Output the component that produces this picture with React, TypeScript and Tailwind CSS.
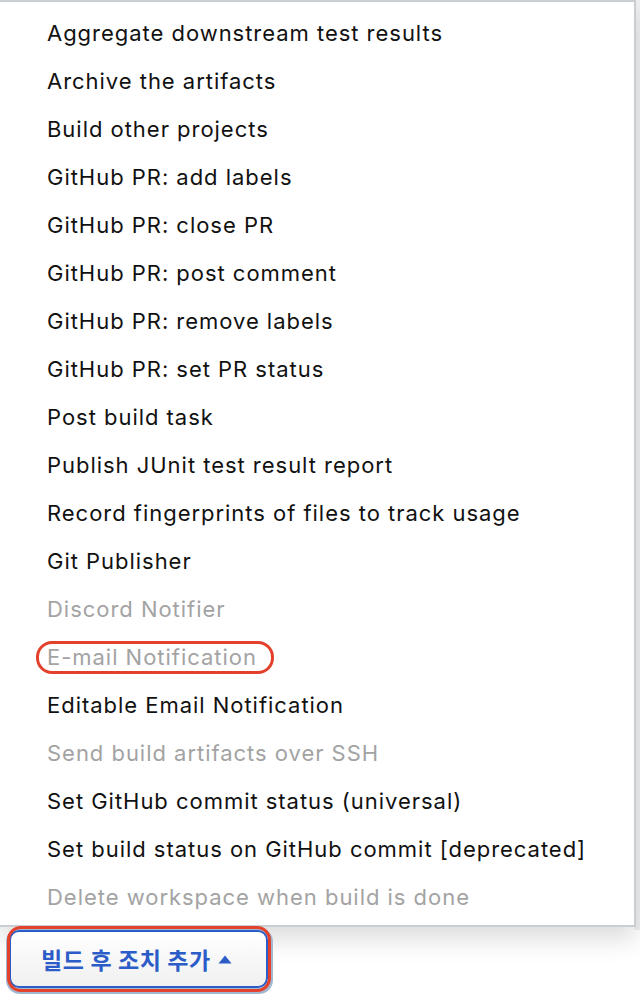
import React from "react";

const items: { label: string; disabled?: boolean }[] = [
  { label: "Aggregate downstream test results" },
  { label: "Archive the artifacts" },
  { label: "Build other projects" },
  { label: "GitHub PR: add labels" },
  { label: "GitHub PR: close PR" },
  { label: "GitHub PR: post comment" },
  { label: "GitHub PR: remove labels" },
  { label: "GitHub PR: set PR status" },
  { label: "Post build task" },
  { label: "Publish JUnit test result report" },
  { label: "Record fingerprints of files to track usage" },
  { label: "Git Publisher" },
  { label: "Discord Notifier", disabled: true },
  { label: "E-mail Notification", disabled: true },
  { label: "Editable Email Notification" },
  { label: "Send build artifacts over SSH", disabled: true },
  { label: "Set GitHub commit status (universal)" },
  { label: "Set build status on GitHub commit [deprecated]" },
  { label: "Delete workspace when build is done", disabled: true },
];

export default function App() {
  return (
    <div className="relative w-[640px] h-[1002px] overflow-hidden bg-white font-['Inter','Noto_Sans_CJK_KR',sans-serif]">
      <div className="absolute right-0 top-0 h-[930px] w-[6px] bg-[#eef0f1]" />
      <div className="relative w-[636px] border-t-2 border-r-2 border-b-2 border-[#c9ced2] bg-white pt-[7px] pb-[4px] shadow-[0_12px_24px_rgba(0,0,0,0.14)]">
        {items.map((it) => (
          <div
            key={it.label}
            className={`flex h-[48px] items-center pl-[47px] text-[22px] tracking-[0.97px] ${
              it.disabled ? "text-[#a3a3a3]" : "text-[#111111]"
            }`}
          >
            {it.label}
          </div>
        ))}
      </div>
      <div className="relative pl-[9px] pt-[3px]">
        <button className="flex h-[58px] w-[259px] items-center justify-center gap-[7px] rounded-[10px] border-2 border-[#2b5cc7] bg-gradient-to-b from-white to-[#f0f0f0] pr-[4px] text-[23px] font-bold tracking-[0.6px] text-[#2b5cc7] shadow-[1px_2px_0_4px_#a2b8d1] font-['Noto_Sans_CJK_KR',sans-serif]">
          <span>빌드 후 조치 추가</span>
          <svg width="14" height="9" viewBox="0 0 14 9">
            <path d="M7 0.5 L13.5 8.5 L0.5 8.5 Z" fill="#2b5cc7" />
          </svg>
        </button>
      </div>
      {/* red annotations */}
      <div className="absolute left-[36px] top-[641px] h-[33px] w-[238px] rounded-[16px] border-[3px] border-[#e4412c]" />
      <div className="absolute left-[7px] top-[926px] h-[66px] w-[264px] rounded-[14px] border-[3px] border-[#e4412c]" />
    </div>
  );
}
